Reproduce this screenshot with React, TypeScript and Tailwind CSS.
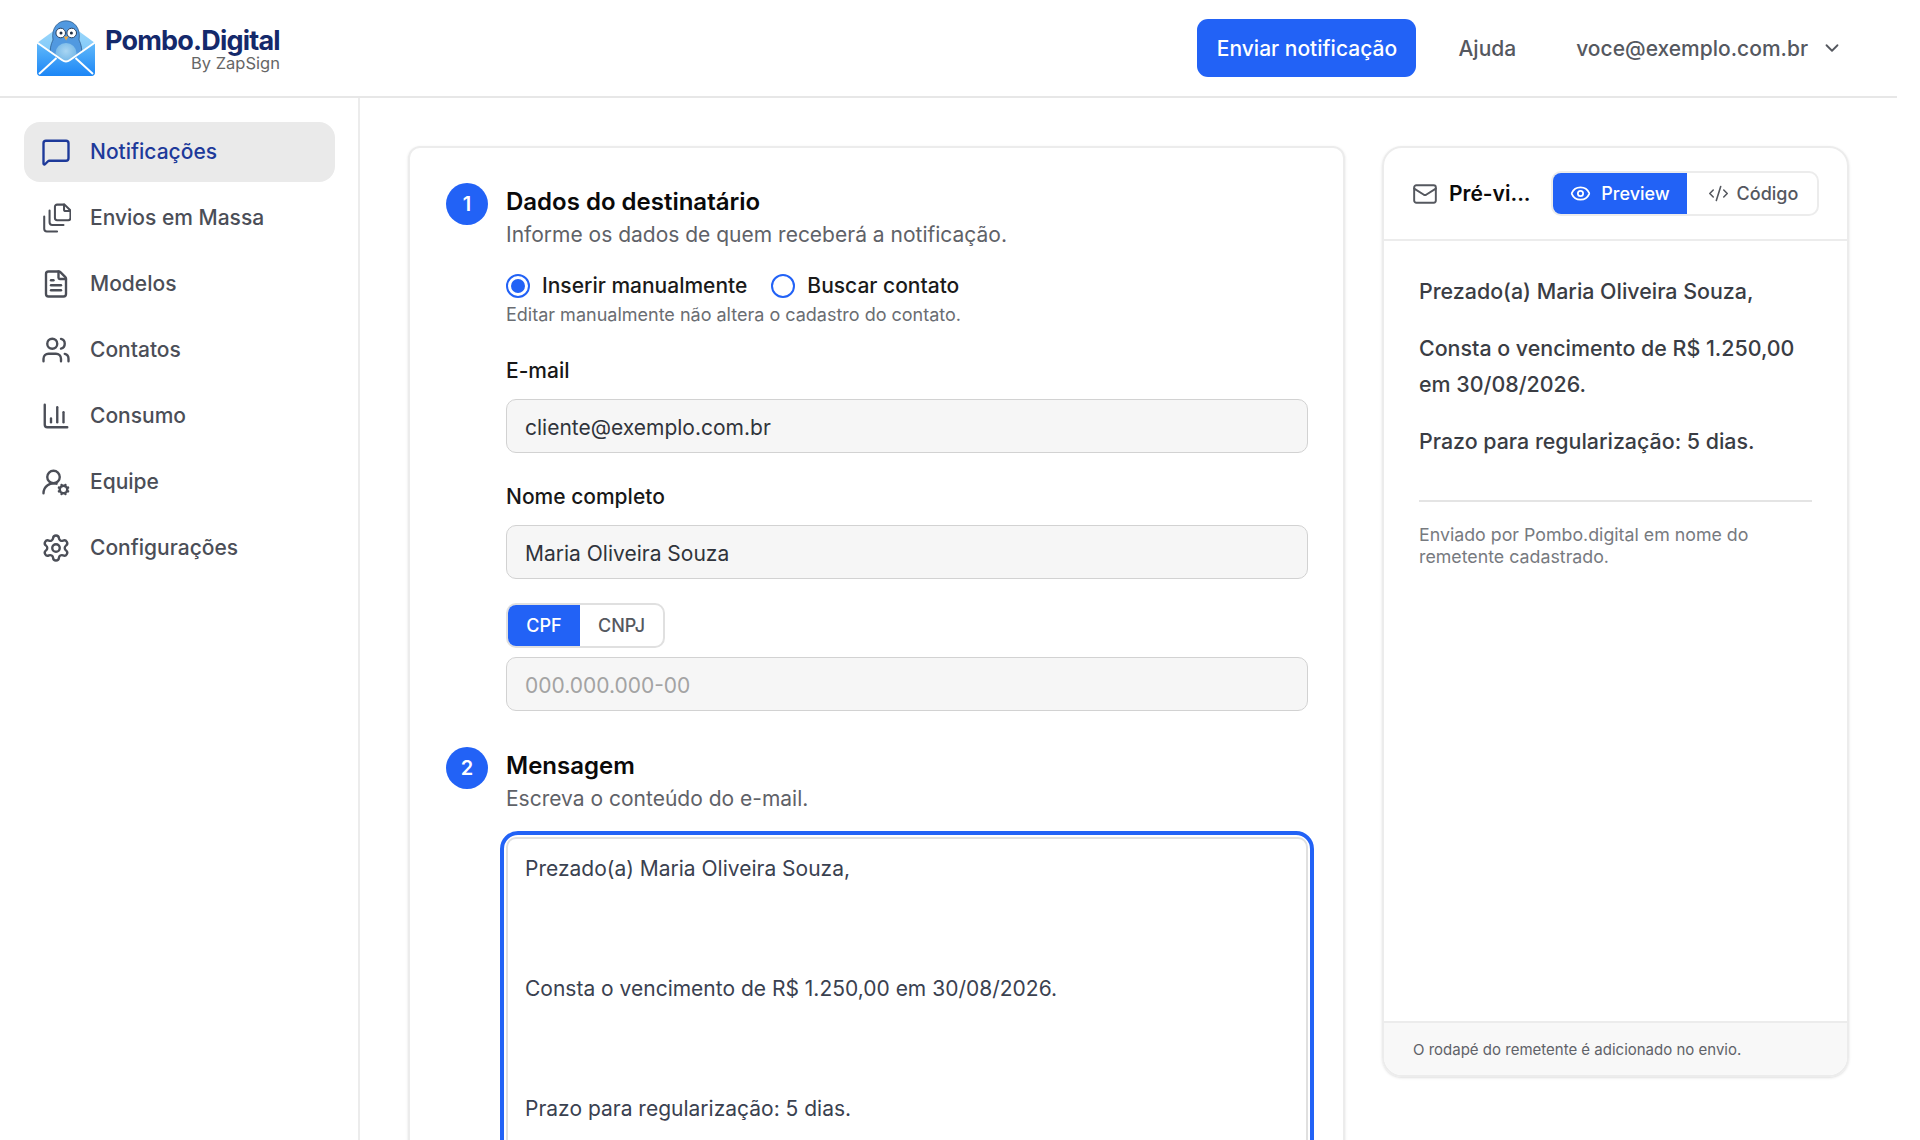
import { ChartColumn, ChevronDown, CodeXml, Eye, FileText, Mail, MessageSquare, Settings, UserRoundCog, Users } from 'lucide-react'

function StackedFiles({ size, strokeWidth }: { size: number; strokeWidth: number }) {
  return (
    <svg width={size} height={size} viewBox="0 0 28 28" fill="none" stroke="currentColor" strokeWidth={strokeWidth} strokeLinecap="round" strokeLinejoin="round">
      <path d="M22 1.5H15a2 2 0 0 0-2 2V14a2 2 0 0 0 2 2h10.5a2 2 0 0 0 2-2V7z" />
      <path d="M21.5 1.5V6a1.5 1.5 0 0 0 1.5 1.5h4.5" />
      <path d="M8 7v11a2.5 2.5 0 0 0 2.5 2.5H21" />
      <path d="M3 12.5v11.5A2.5 2.5 0 0 0 5.5 26.5H15" />
    </svg>
  )
}

const navItems = [
  { label: 'Notificações', icon: MessageSquare, active: true },
  { label: 'Envios em Massa', icon: StackedFiles },
  { label: 'Modelos', icon: FileText },
  { label: 'Contatos', icon: Users },
  { label: 'Consumo', icon: ChartColumn },
  { label: 'Equipe', icon: UserRoundCog },
  { label: 'Configurações', icon: Settings },
]

const messageText = `Prezado(a) Maria Oliveira Souza,


Consta o vencimento de R$ 1.250,00 em 30/08/2026.


Prazo para regularização: 5 dias.


Atenciosamente,`

function Logo() {
  return (
    <svg width="60" height="57" viewBox="0 0 60 57" className="shrink-0">
      <defs>
        <linearGradient id="env-back" x1="0" y1="0" x2="0" y2="1">
          <stop offset="0" stopColor="#a5dcfb" />
          <stop offset="1" stopColor="#5fb8f8" />
        </linearGradient>
        <linearGradient id="env-front" x1="0" y1="0" x2="0" y2="1">
          <stop offset="0" stopColor="#62bafa" />
          <stop offset="1" stopColor="#1c86f6" />
        </linearGradient>
        <radialGradient id="bird-belly" cx="0.5" cy="0.4" r="0.6">
          <stop offset="0" stopColor="#a9d6f3" />
          <stop offset="1" stopColor="#6fb4e6" />
        </radialGradient>
      </defs>
      <path d="M1 23 L27 4 Q30 2 33 4 L59 23 V52 Q59 56 55 56 H5 Q1 56 1 52 Z" fill="url(#env-back)" />
      <path d="M15 40 C13 30 15 24 17 20 C15 8 22 0.8 30 0.8 C38 0.8 45 8 43 20 C45 24 47 30 45 40 Z" fill="#5199e0" stroke="#27527f" strokeWidth="0.7" />
      <ellipse cx="30" cy="33" rx="10.5" ry="10" fill="url(#bird-belly)" />
      <circle cx="24.7" cy="13" r="4.8" fill="#fff" stroke="#27405f" strokeWidth="1" />
      <circle cx="35.7" cy="13" r="4.8" fill="#fff" stroke="#27405f" strokeWidth="1" />
      <circle cx="25" cy="13" r="1.5" fill="#1f2f45" />
      <circle cx="35.4" cy="13" r="1.5" fill="#1f2f45" />
      <path d="M27.8 16.5 H32.5 L30.1 20.5 Z" fill="#f3a93c" />
      <path d="M1 22.5 L26 40 Q30 43 34 40 L59 22.5 V52 Q59 56 55 56 H5 Q1 56 1 52 Z" fill="url(#env-front)" />
      <path d="M1 22.5 L26 40 Q30 43 34 40 L59 22.5" fill="none" stroke="#fff" strokeWidth="2" />
      <path d="M3 54 L20.5 38 M57 54 L39.5 38" fill="none" stroke="#fff" strokeWidth="2" />
    </svg>
  )
}

function Step({ n, title, subtitle }: { n: number; title: string; subtitle: string }) {
  return (
    <div className="flex gap-[18px]">
      <div className="w-[42px] h-[42px] rounded-full bg-[#2262f6] text-white text-[20px] font-semibold flex items-center justify-center shrink-0">
        {n}
      </div>
      <div className="pt-[3px]">
        <h2 className="text-[24px] leading-[32px] font-semibold text-[#0a0a0a]">{title}</h2>
        <p className="text-[21px] leading-[30px] mt-[2px] text-[#5f6268]">{subtitle}</p>
      </div>
    </div>
  )
}

function Field({ label, value, placeholder }: { label?: string; value?: string; placeholder?: string }) {
  return (
    <div>
      {label && <label className="block text-[21px] leading-[26px] font-medium text-[#171717] mb-[15px]">{label}</label>}
      <input
        readOnly
        value={value}
        placeholder={placeholder}
        className="w-full h-[54px] rounded-[10px] border border-[#d2d2d2] bg-[#f6f6f6] px-[18px] pt-[2px] text-[21px] text-[#30343b] placeholder:text-[#a3a3a3] outline-none"
      />
    </div>
  )
}

export default function App() {
  return (
    <div className="h-screen w-[1897px] overflow-hidden bg-white font-['Inter',sans-serif]">
      <header className="h-[98px] border-b-2 border-[#e7e7e7] flex items-center pl-[36px] pr-[54px]">
        <Logo />
        <div className="ml-[9px] flex flex-col items-end">
          <span className="text-[27px] leading-[30px] font-bold tracking-[-0.8px] text-[#14296b]">Pombo.Digital</span>
          <span className="text-[16.5px] leading-[14px] text-[#666666]">By ZapSign</span>
        </div>
        <button className="ml-auto h-[58px] w-[219px] pt-[2px] rounded-[11px] bg-[#2262f6] text-white text-[21px] font-medium">
          Enviar notificação
        </button>
        <span className="ml-[42px] pt-[2px] text-[21px] font-medium text-[#55585f]">Ajuda</span>
        <span className="ml-[60px] pt-[2px] text-[21px] font-medium text-[#55585f]">voce@exemplo.com.br</span>
        <ChevronDown size={22} strokeWidth={2} className="ml-[13px] text-[#55585f]" />
      </header>

      <div className="flex h-[1042px]">
        <aside className="w-[360px] shrink-0 border-r-2 border-[#ececec] pt-[24px] px-[24px] flex flex-col gap-[6px]">
          {navItems.map(({ label, icon: Icon, active }) => (
            <a
              key={label}
              className={`h-[60px] w-[311px] rounded-[16px] flex items-center gap-[19px] pl-[17px] text-[21px] font-medium ${active ? 'bg-[#eaeaea] text-[#1e3a9a]' : 'text-[#4b4e57]'}`}
            >
              <Icon size={30} strokeWidth={1.9} />
              {label}
            </a>
          ))}
        </aside>

        <main className="flex-1 flex items-start gap-[37px] pt-[48px] pl-[48px]">
          <section className="w-[937px] shrink-0 h-[1200px] rounded-[12px] border-2 border-[#ececec] shadow-sm pl-[36px] pr-[35px] pt-[35px]">
            <Step n={1} title="Dados do destinatário" subtitle="Informe os dados de quem receberá a notificação." />

            <div className="ml-[60px] mt-[21px]">
              <div className="flex items-center h-[30px] text-[21px] font-medium text-[#1a1a1a]">
                <span className="w-[24px] h-[24px] rounded-full border-2 border-[#2262f6] flex items-center justify-center mr-[12px]">
                  <span className="w-[14px] h-[14px] rounded-full bg-[#2262f6]" />
                </span>
                Inserir manualmente
                <span className="w-[24px] h-[24px] rounded-full border-2 border-[#2262f6] ml-[24px] mr-[12px]" />
                Buscar contato
              </div>
              <p className="mt-[2px] text-[18px] leading-[24px] text-[#6a6d72]">Editar manualmente não altera o cadastro do contato.</p>

              <div className="mt-[31px]">
                <Field label="E-mail" value="cliente@exemplo.com.br" />
              </div>
              <div className="mt-[31px]">
                <Field label="Nome completo" value="Maria Oliveira Souza" />
              </div>

              <div className="mt-[24px] inline-flex h-[45px] rounded-[10px] border-2 border-[#e0e0e0] overflow-hidden text-[18px] font-medium align-top">
                <span className="w-[72px] bg-[#2262f6] text-white flex items-center justify-center">CPF</span>
                <span className="w-[83px] text-[#55585f] flex items-center justify-center">CNPJ</span>
              </div>
              <div className="mt-[9px]">
                <Field placeholder="000.000.000-00" />
              </div>
            </div>

            <div className="mt-[36px]">
              <Step n={2} title="Mensagem" subtitle="Escreva o conteúdo do e-mail." />
            </div>

            <div className="ml-[60px] mt-[23px] rounded-[12px] outline-[4px] outline-offset-[2px] outline-[#2262f6]">
              <textarea
                readOnly
                value={messageText}
                className="w-full h-[420px] block rounded-[10px] border-2 border-[#e0e0e0] px-[17px] py-[10px] text-[21px] leading-[40px] text-[#3a4150] resize-none outline-none"
              />
            </div>
          </section>

          <section className="w-[467px] h-[931px] shrink-0 rounded-[20px] border-2 border-[#ececec] shadow-sm flex flex-col overflow-hidden">
            <div className="h-[93px] shrink-0 border-b-2 border-[#ececec] flex items-center pl-[28px]">
              <Mail size={26} strokeWidth={1.8} className="text-[#55585f] shrink-0" />
              <span className="ml-[11px] text-[21px] font-semibold text-[#0a0a0a] w-[90px]">Pré-vi...</span>
              <div className="ml-[12px] flex h-[45px] rounded-[10px] border-2 border-[#ececec] overflow-hidden text-[18px] font-medium">
                <span className="w-[134px] bg-[#2262f6] text-white flex items-center justify-center gap-[10px]">
                  <Eye size={21} strokeWidth={2} />
                  Preview
                </span>
                <span className="w-[130px] text-[#55585f] flex items-center justify-center gap-[8px] pl-[2px]">
                  <CodeXml size={21} strokeWidth={1.8} />
                  Código
                </span>
              </div>
            </div>

            <div className="flex-1 px-[35px] pt-[32px] text-[#3a3d44]">
              <p className="text-[21.4px] leading-[36px] font-medium">Prezado(a) Maria Oliveira Souza,</p>
              <p className="mt-[21px] text-[21.4px] leading-[36px] font-medium">Consta o vencimento de R$ 1.250,00 em 30/08/2026.</p>
              <p className="mt-[21px] text-[21.4px] leading-[36px] font-medium">Prazo para regularização: 5 dias.</p>
              <div className="mt-[41px] border-t-2 border-[#e4e4e4]" />
              <p className="mt-[22px] text-[17.8px] leading-[22px] text-[#777a7f]">Enviado por Pombo.digital em nome do remetente cadastrado.</p>
            </div>

            <div className="h-[54px] shrink-0 border-t-2 border-[#ececec] bg-[#f8f8f8] flex items-center pl-[29px] pt-[2px] text-[15px] text-[#5f6268]">
              O rodapé do remetente é adicionado no envio.
            </div>
          </section>
        </main>
      </div>
    </div>
  )
}
